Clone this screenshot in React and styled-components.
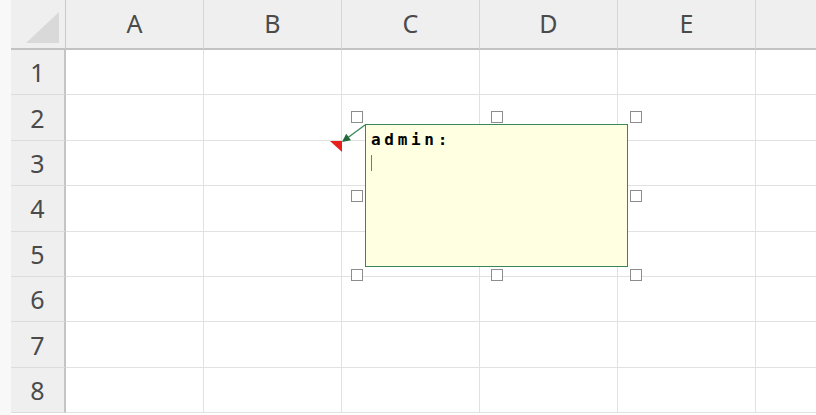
import React from "react";
import styled, { createGlobalStyle } from "styled-components";

const GlobalStyle = createGlobalStyle`
  html, body {
    margin: 0;
    padding: 0;
    background: #ffffff;
  }
`;

const columns = ["A", "B", "C", "D", "E", ""];
const rows = [1, 2, 3, 4, 5, 6, 7, 8];
// 3x3 handle grid, centre cell left empty
const handles = [1, 1, 1, 1, 0, 1, 1, 1, 1];

function App() {
  return (
    <>
      <GlobalStyle />
      <Page>
        <Gutter />
        <Sheet>
          <Corner>
            <CornerMark />
          </Corner>
          {columns.map((c, i) => (
            <ColHeader key={"h" + i} last={i === columns.length - 1}>
              {c}
            </ColHeader>
          ))}
          {rows.map((r) => (
            <React.Fragment key={r}>
              <RowHeader>{r}</RowHeader>
              {columns.map((c, i) => (
                <Cell key={r + "-" + i} last={i === columns.length - 1} />
              ))}
            </React.Fragment>
          ))}
        </Sheet>

        <Pointer width="50" height="40" viewBox="325 118 50 40">
          <polygon points="330,141 342,141 342,152" fill="#e8201c" />
          <line x1="365" y1="125" x2="346" y2="139" stroke="#3c8a58" strokeWidth="1.4" />
          <polygon points="342,142 351,140.2 346.2,133.8" fill="#1f6b3e" />
        </Pointer>

        <Selection>
          <Note>
            <Author>admin:</Author>
            <Caret />
          </Note>
          <HandleGrid>
            {handles.map((h, i) => (h ? <Handle key={i} /> : <span key={i} />))}
          </HandleGrid>
        </Selection>
      </Page>
    </>
  );
}

const Page = styled.div`
  position: relative;
  width: 816px;
  height: 415px;
  display: flex;
  overflow: hidden;
  background: #fff;
`;

const Gutter = styled.div`
  width: 11px;
  flex: none;
  background: #f8f8f8;
`;

const Sheet = styled.div`
  flex: 1;
  display: grid;
  grid-template-columns: 55px repeat(5, 138px) 1fr;
  grid-template-rows: 50px repeat(8, 45.4px);
  font-family: "Noto Sans", "Liberation Sans", sans-serif;
`;

const Corner = styled.div`
  display: flex;
  align-items: flex-end;
  justify-content: flex-end;
  padding: 0 6px 5px 0;
  background: #efefef;
  border-right: 1px solid #c9c9c9;
  border-bottom: 2px solid #c2c2c2;
`;

const CornerMark = styled.div`
  width: 33px;
  height: 31px;
  background: #d9d9d9;
  clip-path: polygon(100% 0, 100% 100%, 0 100%);
`;

const ColHeader = styled.div`
  display: flex;
  align-items: center;
  justify-content: center;
  background: #efefef;
  color: #4a4a4a;
  font-size: 25px;
  padding-bottom: 2px;
  border-right: ${(p) => (p.last ? "none" : "1px solid #d6d6d6")};
  border-bottom: 2px solid #c2c2c2;
`;

const RowHeader = styled.div`
  display: flex;
  align-items: center;
  justify-content: center;
  background: #efefef;
  color: #4a4a4a;
  font-size: 25px;
  border-right: 2px solid #c4c4c4;
  border-bottom: 1px solid #dcdcdc;
`;

const Cell = styled.div`
  background: #fff;
  border-right: ${(p) => (p.last ? "none" : "1px solid #e1e1e1")};
  border-bottom: 1px solid #e1e1e1;
`;

/* comment indicator and leader arrow, drawn over the grid */
const Pointer = styled.svg`
  position: absolute;
  left: 325px;
  top: 118px;
  overflow: visible;
`;

/* the selected comment shape floating over the sheet */
const Selection = styled.div`
  position: absolute;
  left: 357px;
  top: 117px;
  width: 279px;
  height: 158px;
  box-sizing: border-box;
  padding: 7px 8px 8px 8px;
  display: flex;
`;

const Note = styled.div`
  flex: 1;
  box-sizing: border-box;
  background: #ffffe1;
  border: 1.5px solid #3a8756;
  padding: 8px 0 0 5px;
`;

const HandleGrid = styled.div`
  position: absolute;
  inset: -6px;
  display: grid;
  grid-template-columns: repeat(3, 12px);
  grid-template-rows: repeat(3, 12px);
  justify-content: space-between;
  align-content: space-between;
  pointer-events: none;
`;

const Handle = styled.div`
  box-sizing: border-box;
  width: 12px;
  height: 12px;
  border: 1.5px solid #8d8d8d;
  background: #fff;
`;

const Author = styled.div`
  font-family: "DejaVu Sans Mono", "Liberation Mono", monospace;
  font-weight: 700;
  font-size: 16px;
  letter-spacing: 3.7px;
  line-height: 14px;
  color: #000;
`;

const Caret = styled.div`
  width: 1px;
  height: 16px;
  margin-top: 8px;
  background: #7a7a7a;
`;

export default App;
